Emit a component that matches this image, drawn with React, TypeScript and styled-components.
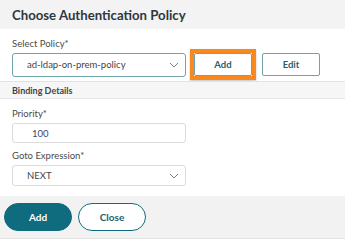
import styled, { createGlobalStyle } from "styled-components"

const GlobalStyle = createGlobalStyle`
  html, body {
    margin: 0;
    padding: 0;
    background: #ffffff;
  }
  body {
    font-family: "Lato", "Liberation Sans", sans-serif;
    color: #333333;
  }
`

const TEAL = "#0f6b7e"

const Dialog = styled.div`
  width: 345px;
  display: flex;
  flex-direction: column;
`

const Header = styled.div`
  height: 29px;
  background: #f3f3f3;
  display: flex;
  align-items: center;
  padding-left: 12px;
`

const Title = styled.h1`
  margin: 0;
  font-size: 13.2px;
  font-weight: 700;
  color: #2f3640;
`

const Section = styled.div<{ $pb: number }>`
  display: flex;
  flex-direction: column;
  padding: 10px 12px ${(p) => p.$pb}px 12px;
`

const Label = styled.div<{ $mb: number }>`
  font-size: 9.5px;
  color: #4a4a4a;
  line-height: 10px;
  margin-bottom: ${(p) => p.$mb}px;
`

const Row = styled.div`
  display: flex;
  align-items: center;
`

const SelectBox = styled.div<{ $accent?: boolean; $h: number }>`
  box-sizing: border-box;
  width: 174px;
  height: ${(p) => p.$h}px;
  border: 1px solid ${(p) => (p.$accent ? "#6fa3b0" : "#dcdcdc")};
  border-radius: 3px;
  display: flex;
  align-items: center;
  justify-content: space-between;
  padding: 0 6px 0 14px;
  font-size: 9.5px;
  color: #3d4550;
`

const TextInput = styled.div`
  box-sizing: border-box;
  width: 174px;
  height: 20px;
  border: 1px solid #dcdcdc;
  border-radius: 3px;
  display: flex;
  align-items: center;
  padding-left: 19px;
  font-size: 9.5px;
  color: #3d4a66;
`

const Highlight = styled.div`
  margin-left: 4px;
  border: 4px solid #f7891e;
  box-shadow: 0 1px 2px rgba(0, 0, 0, 0.25);
  display: flex;
`

const OutlineButton = styled.button<{ $ml?: number }>`
  box-sizing: border-box;
  width: 58px;
  height: 23px;
  margin-left: ${(p) => p.$ml ?? 0}px;
  background: #fff;
  border: 1.5px solid #6fa3b0;
  border-radius: 2px;
  font-family: inherit;
  font-size: 9.5px;
  font-weight: 700;
  color: #2d5d6b;
  padding: 0;
`

const SubHeader = styled.div`
  box-sizing: border-box;
  height: 18px;
  background: #f6f6f6;
  border-top: 1px solid #e2e2e2;
  border-bottom: 1px solid #e6e6e6;
  display: flex;
  align-items: center;
  padding-left: 12px;
  font-size: 9px;
  font-weight: 700;
  color: #444;
`

const Field = styled.div<{ $mb: number }>`
  display: flex;
  flex-direction: column;
  margin-bottom: ${(p) => p.$mb}px;
`

const Footer = styled.div`
  height: 42px;
  background: #f2f2f2;
  border-bottom: 1px solid #e2e2e2;
  display: flex;
  align-items: center;
  gap: 6px;
  padding-left: 4px;
`

const PillButton = styled.button<{ $primary?: boolean }>`
  box-sizing: border-box;
  width: 68px;
  height: 28px;
  border-radius: 14px;
  border: 1.5px solid ${TEAL};
  background: ${(p) => (p.$primary ? TEAL : "#ffffff")};
  color: ${(p) => (p.$primary ? "#ffffff" : "#1f5d6c")};
  font-family: inherit;
  font-size: 10px;
  font-weight: 700;
  padding: 0;
`

const Chevron = () => (
  <svg width="10" height="6" viewBox="0 0 10 6" fill="none">
    <path d="M1 1 L5 5 L9 1" stroke="#7a7f86" strokeWidth="1" />
  </svg>
)

export default function App() {
  return (
    <Dialog>
      <GlobalStyle />
      <Header>
        <Title>Choose Authentication Policy</Title>
      </Header>
      <Section $pb={1}>
        <Label $mb={0}>Select Policy*</Label>
        <Row>
          <SelectBox $accent $h={24}>
            <span>ad-ldap-on-prem-policy</span>
            <Chevron />
          </SelectBox>
          <Highlight>
            <OutlineButton>Add</OutlineButton>
          </Highlight>
          <OutlineButton $ml={6}>Edit</OutlineButton>
        </Row>
      </Section>
      <SubHeader>Binding Details</SubHeader>
      <Section $pb={10}>
        <Field $mb={8}>
          <Label $mb={4}>Priority*</Label>
          <TextInput>100</TextInput>
        </Field>
        <Field $mb={0}>
          <Label $mb={4}>Goto Expression*</Label>
          <SelectBox $h={21}>
            <span>NEXT</span>
            <Chevron />
          </SelectBox>
        </Field>
      </Section>
      <Footer>
        <PillButton $primary>Add</PillButton>
        <PillButton>Close</PillButton>
      </Footer>
    </Dialog>
  )
}
